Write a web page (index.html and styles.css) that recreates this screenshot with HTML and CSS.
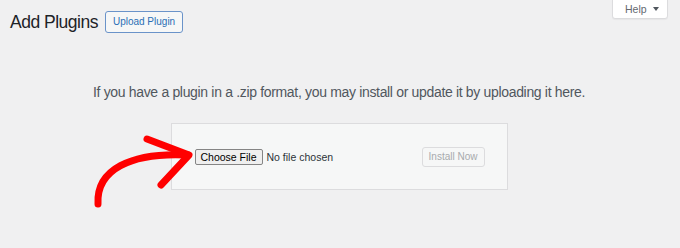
FILE: index.html
```html
<!DOCTYPE html>
<html lang="en">
<head>
    <meta charset="UTF-8">
    <title>Add Plugins</title>
    <link rel="stylesheet" href="styles.css">
</head>
<body>
    <div class="wrap">
        <button class="help-tab">Help <span class="caret"></span></button>

        <div class="page-header">
            <h1 class="page-title">Add Plugins</h1>
            <button class="upload-toggle">Upload Plugin</button>
        </div>

        <div class="upload-plugin">
            <p class="install-help">If you have a plugin in a .zip format, you may install or update it by uploading it here.</p>
            <form class="upload-form">
                <div class="file-input">
                    <button type="button" class="file-button">Choose File</button>
                    <span class="file-name">No file chosen</span>
                </div>
                <button type="button" class="install-button" disabled>Install Now</button>
            </form>
        </div>

        <!-- hand drawn arrow pointing at the file button -->
        <svg class="arrow" width="680" height="248" viewBox="0 0 680 248">
            <path d="M98 204 C96 170, 130 152, 188 155" />
            <path d="M147 139 L189 155 L161 185" />
        </svg>
    </div>
</body>
</html>
```

FILE: styles.css
```css
body, html {
    margin: 0;
    padding: 0;
    background-color: #f0f0f1;
    font-family: 'Liberation Sans', Arial, sans-serif;
    color: #1d2327;
}
.wrap {
    position: relative;
    width: 680px;
    height: 248px;
    overflow: hidden;
}
button {
    font-family: inherit;
    margin: 0;
    cursor: pointer;
}
.help-tab {
    position: absolute;
    top: -1px;
    right: 12px;
    width: 56px;
    height: 20px;
    padding: 0 0 0 12px;
    display: flex;
    align-items: center;
    gap: 6px;
    background-color: #fff;
    border: 1px solid #dcdcde;
    border-radius: 0 0 3px 3px;
    box-shadow: 0 1px 1px rgba(0, 0, 0, 0.04);
    color: #646970;
    font-size: 10.5px;
}
.caret {
    width: 0;
    height: 0;
    border-left: 3px solid transparent;
    border-right: 3px solid transparent;
    border-top: 4px solid #50575e;
}
.page-header {
    display: flex;
    align-items: center;
    gap: 7px;
    padding: 11px 0 0 10px;
    height: 22px;
}
.page-title {
    margin: 0;
    font-size: 17.5px;
    font-weight: 400;
    letter-spacing: -0.5px;
    line-height: 22px;
}
.upload-toggle {
    height: 22px;
    padding: 0 7px;
    font-size: 10px;
    line-height: 20px;
    color: #2a6fb5;
    background-color: #f6f7f7;
    border: 1px solid #6a93c9;
    border-radius: 3px;
}
.upload-plugin {
    width: 678px;
    text-align: center;
}
.install-help {
    margin: 51px 0 0;
    font-size: 14px;
    line-height: 16px;
    letter-spacing: -0.33px;
    color: #50575e;
}
.upload-form {
    box-sizing: border-box;
    width: 337px;
    height: 67px;
    margin: 23px auto 0;
    padding: 0 22px 0 23px;
    display: flex;
    align-items: center;
    justify-content: space-between;
    background-color: #f6f7f7;
    border: 1px solid #dcdcde;
}
.file-input {
    display: flex;
    align-items: center;
    gap: 4px;
}
.file-button {
    height: 16px;
    padding: 0 5px;
    font-size: 10.5px;
    line-height: 14px;
    color: #000;
    background-color: #efefef;
    border: 1px solid #858585;
    border-radius: 2px;
}
.file-name {
    font-size: 10.5px;
    color: #2c3338;
}
.install-button {
    height: 20px;
    padding: 0 6px;
    font-size: 10px;
    line-height: 18px;
    color: #a7aaad;
    background-color: #f6f7f7;
    border: 1px solid #dcdcde;
    border-radius: 3px;
    cursor: default;
}
.arrow {
    position: absolute;
    top: 0;
    left: 0;
    pointer-events: none;
}
.arrow path {
    fill: none;
    stroke: #ff0000;
    stroke-width: 7;
    stroke-linecap: round;
    stroke-linejoin: round;
}
```
